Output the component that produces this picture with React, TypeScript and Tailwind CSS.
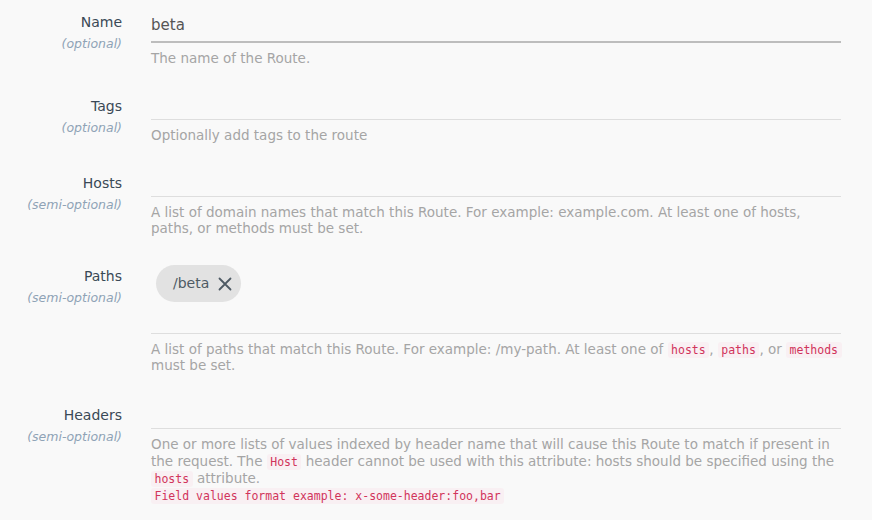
import React from "react";

const sans = { fontFamily: '"DejaVu Sans", sans-serif' };

function Code({ children }: { children: React.ReactNode }) {
  return (
    <code className="rounded-[3px] bg-[#f9f0f3] px-[3.5px] py-[1px] font-['DejaVu_Sans_Mono',monospace] text-[11.5px] leading-[14px] text-[#d1345b]">
      {children}
    </code>
  );
}

function Label({ name, hint }: { name: string; hint: string }) {
  return (
    <div className="w-[122px] shrink-0 text-right">
      <div className="text-[14px] leading-[20px] text-[#3a4956]">{name}</div>
      <div className="text-[12.5px] italic leading-[24px] text-[#8fa3b6]">{hint}</div>
    </div>
  );
}

function Help({
  children,
  leading = "leading-[16px]",
  width = "w-[690px]",
}: {
  children: React.ReactNode;
  leading?: string;
  width?: string;
}) {
  return <div className={`mt-[7px] text-[13.5px] text-[#a5a5a5] ${width} ${leading}`}>{children}</div>;
}

export default function App() {
  return (
    <div style={sans} className="min-h-[520px] w-[872px] bg-[#f9f9f9] pt-[12px]">
      <div className="flex">
        <Label name="Name" hint="(optional)" />
        <div className="ml-[29px] w-[690px]">
          <div className="flex h-[31px] items-center border-b-2 border-[#bdbdbd] pb-[2px] text-[15px] text-[#555]">beta</div>
          <Help>The name of the Route.</Help>
        </div>
      </div>

      <div className="mt-[30px] flex">
        <Label name="Tags" hint="(optional)" />
        <div className="ml-[29px] w-[690px]">
          <div className="h-[24px] border-b border-[#dedede]" />
          <Help>Optionally add tags to the route</Help>
        </div>
      </div>

      <div className="mt-[30px] flex">
        <Label name="Hosts" hint="(semi-optional)" />
        <div className="ml-[29px] w-[690px]">
          <div className="h-[24px] border-b border-[#dedede]" />
          <Help>
            A list of domain names that match this Route. For example: example.com. At least one of hosts, paths, or methods must be set.
          </Help>
        </div>
      </div>

      <div className="mt-[30px] flex">
        <Label name="Paths" hint="(semi-optional)" />
        <div className="ml-[29px] w-[690px]">
          <div className="-mt-[1px] ml-[5px] inline-flex h-[37px] items-center rounded-full bg-[#e2e2e2] pl-[17px] pr-[9px] align-top">
            <span className="text-[14px] text-[#4e5a64]">/beta</span>
            <svg className="ml-[9px]" width="14" height="14" viewBox="0 0 14 14" fill="none" stroke="#4e5a64" strokeWidth="1.8" strokeLinecap="round">
              <path d="M1.5 1.5 L12.5 12.5 M12.5 1.5 L1.5 12.5" />
            </svg>
          </div>
          <div className="h-[32px] border-b border-[#dedede]" />
          <Help width="w-[696px]">
            A list of paths that match this Route. For example: /my-path. At least one of <Code>hosts</Code>, <Code>paths</Code>, or{" "}
            <Code>methods</Code> must be set.
          </Help>
        </div>
      </div>

      <div className="mt-[32px] flex">
        <Label name="Headers" hint="(semi-optional)" />
        <div className="ml-[29px] w-[690px]">
          <div className="h-[24px] border-b border-[#dedede]" />
          <Help leading="leading-[17px]">
            One or more lists of values indexed by header name that will cause this Route to match if present in the request. The{" "}
            <Code>Host</Code> header cannot be used with this attribute: hosts should be specified using the <Code>hosts</Code> attribute.
            <br />
            <Code>Field values format example: x-some-header:foo,bar</Code>
          </Help>
        </div>
      </div>
    </div>
  );
}
